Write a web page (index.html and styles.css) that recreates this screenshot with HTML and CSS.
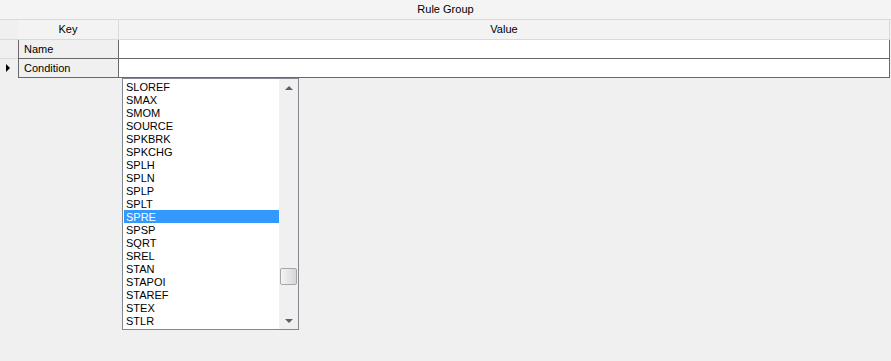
FILE: index.html
```html
<!DOCTYPE html>
<html lang="en">
<head>
  <meta charset="UTF-8" />
  <title>Rule Group</title>
  <link rel="stylesheet" href="styles.css">
</head>
<body>
  <div class="caption">Rule Group</div>
  <div class="grid">
    <div class="row head">
      <div class="rh"></div>
      <div class="hc">Key</div>
      <div class="hc last">Value</div>
    </div>
    <div class="row">
      <div class="rh"></div>
      <div class="key">Name</div>
      <div class="val"></div>
    </div>
    <div class="row">
      <div class="rh cur"><span class="tri"></span></div>
      <div class="key">Condition</div>
      <div class="val"></div>
    </div>
  </div>

  <div class="dropdown">
    <ul class="items">
      <li>SLOREF</li>
      <li>SMAX</li>
      <li>SMOM</li>
      <li>SOURCE</li>
      <li>SPKBRK</li>
      <li>SPKCHG</li>
      <li>SPLH</li>
      <li>SPLN</li>
      <li>SPLP</li>
      <li>SPLT</li>
      <li class="sel">SPRE</li>
      <li>SPSP</li>
      <li>SQRT</li>
      <li>SREL</li>
      <li>STAN</li>
      <li>STAPOI</li>
      <li>STAREF</li>
      <li>STEX</li>
      <li>STLR</li>
    </ul>
    <div class="scroll">
      <span class="arrow up"></span>
      <span class="track"><span class="thumb"></span></span>
      <span class="arrow down"></span>
    </div>
  </div>
</body>
</html>
```

FILE: styles.css
```css
body {
  margin: 0;
  background: #f0f0f0;
  font-family: "Liberation Sans", Arial, sans-serif;
  font-size: 11px;
  color: #000;
  width: 891px;
  height: 361px;
  position: relative;
  overflow: hidden;
}
.caption {
  height: 19px;
  line-height: 19px;
  text-align: center;
  background: #f4f4f4;
  border-bottom: 1px solid #dadada;
}
.grid { width: 890px; }
.row {
  display: grid;
  grid-template-columns: 18px 101px 1fr;
}
.head { background: #f3f3f3; }
.head .rh, .hc {
  height: 19px;
  border-bottom: 1px solid #dadada;
}
.hc {
  line-height: 19px;
  text-align: center;
  border-right: 1px solid #dadada;
}
.rh {
  height: 18px;
  border-bottom: 1px solid #dadada;
  background: #f0f0f0;
  position: relative;
}
.row:last-child .rh { border-bottom-color: #f0f0f0; }
.key, .val {
  height: 18px;
  line-height: 18px;
  border-bottom: 1px solid #696969;
  border-right: 1px solid #696969;
}
.key {
  background: #f0f0f0;
  border-left: 1px solid #696969;
  padding-left: 5px;
}
.val { background: #fff; }
.tri {
  position: absolute;
  left: 6px;
  top: 5px;
  width: 0;
  height: 0;
  border-top: 4px solid transparent;
  border-bottom: 4px solid transparent;
  border-left: 4px solid #000;
}

/* open combo list, floats over the grid */
.dropdown {
  position: absolute;
  left: 122px;
  top: 78px;
  width: 175px;
  height: 250px;
  border: 1px solid #828790;
  background: #fff;
  display: flex;
}
.items {
  list-style: none;
  margin: 0;
  padding: 1px 0 0 1px;
  flex: 1;
}
.items li {
  height: 13px;
  line-height: 14px;
  padding-left: 2px;
}
.items li.sel {
  background: #3399ff;
  color: #fff;
}
.scroll {
  width: 19px;
  background: #f0f0f0;
  display: flex;
  flex-direction: column;
}
.arrow {
  height: 17px;
  display: flex;
  align-items: center;
  justify-content: center;
}
.arrow::before {
  content: "";
  width: 0;
  height: 0;
  border-left: 4px solid transparent;
  border-right: 4px solid transparent;
}
.arrow.up::before { border-bottom: 4px solid #606060; }
.arrow.down::before { border-top: 4px solid #606060; }
.track {
  flex: 1;
  position: relative;
}
.thumb {
  position: absolute;
  left: 1px;
  top: 172px;
  width: 15px;
  height: 15px;
  border: 1px solid #a6a6a6;
  border-radius: 2px;
  background: linear-gradient(to right, #f4f4f4, #e2e2e2 60%, #d6d6d6);
}
```
